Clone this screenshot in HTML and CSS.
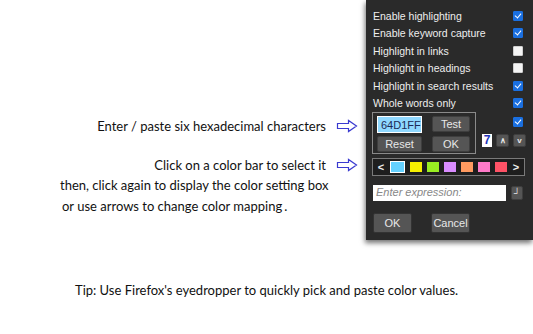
FILE: index.html
```html
<!DOCTYPE html>
<html lang="en">

<head>
    <meta charset="UTF-8">
    <title>Highlighter options</title>
    <link rel="stylesheet" href="styles.css">
</head>

<body>
    <div class="page">
        <div class="top">
            <div class="notes">
                <div class="note note-hex">
                    <span>Enter / paste six hexadecimal characters</span>
                    <svg class="arrow" width="22" height="14" viewBox="0 0 22 14">
                        <path d="M1.5 4.5 H12.5 V1.5 L20.5 7 L12.5 12.5 V9.5 H1.5 Z" fill="none" stroke="#3a3ad0" stroke-width="1.2" stroke-linejoin="miter"/>
                    </svg>
                </div>
                <div class="note note-bar">
                    <span>Click on a color bar to select it</span>
                    <svg class="arrow" width="22" height="14" viewBox="0 0 22 14">
                        <path d="M1.5 4.5 H12.5 V1.5 L20.5 7 L12.5 12.5 V9.5 H1.5 Z" fill="none" stroke="#3a3ad0" stroke-width="1.2" stroke-linejoin="miter"/>
                    </svg>
                </div>
                <p class="note-line">then, click again to display the color setting box</p>
                <p class="note-line">or use arrows to change color mapping<span class="dot">.</span></p>
            </div>

            <div class="panel">
                <ul class="options">
                    <li><span>Enable highlighting</span><i class="check on"></i></li>
                    <li><span>Enable keyword capture</span><i class="check on"></i></li>
                    <li><span>Highlight in links</span><i class="check"></i></li>
                    <li><span>Highlight in headings</span><i class="check"></i></li>
                    <li><span>Highlight in search results</span><i class="check on"></i></li>
                    <li><span>Whole words only</span><i class="check on"></i></li>
                </ul>

                <div class="color-row">
                    <div class="color-box">
                        <span class="hex">64D1FF</span>
                        <button class="btn">Test</button>
                        <button class="btn">Reset</button>
                        <button class="btn">OK</button>
                    </div>
                    <div class="color-side">
                        <i class="check on"></i>
                        <div class="mapping">
                            <span class="num">7</span>
                            <button class="btn small">&#x2227;</button>
                            <button class="btn small">v</button>
                        </div>
                    </div>
                </div>

                <div class="bar">
                    <span class="bar-arrow">&lt;</span>
                    <span class="swatch selected" style="background:#64d1ff"></span>
                    <span class="swatch" style="background:#f7f000"></span>
                    <span class="swatch" style="background:#99ee22"></span>
                    <span class="swatch" style="background:#d98cff"></span>
                    <span class="swatch" style="background:#ff9a60"></span>
                    <span class="swatch" style="background:#ff7ac8"></span>
                    <span class="swatch" style="background:#ff5266"></span>
                    <span class="bar-arrow">&gt;</span>
                </div>

                <div class="expr">
                    <span class="expr-input">Enter expression:</span>
                    <button class="btn enter">&#x2518;</button>
                </div>

                <div class="actions">
                    <button class="btn big">OK</button>
                    <button class="btn big">Cancel</button>
                </div>
            </div>
        </div>

        <p class="tip">Tip: Use Firefox's eyedropper to quickly pick and paste color values.</p>
    </div>
</body>

</html>
```

FILE: styles.css
```css
html,
body {
    margin: 0;
    padding: 0;
    background: #fff;
}

.page {
    width: 533px;
    height: 334px;
    overflow: hidden;
    font-family: Lato, "Liberation Sans", sans-serif;
    color: #111;
}

.top {
    display: flex;
    align-items: flex-start;
}

.notes {
    width: 366px;
    padding-top: 117px;
    font-size: 13px;
}

.note {
    display: flex;
    justify-content: flex-end;
    align-items: center;
    height: 18px;
    padding-right: 8px;
}

.note .arrow {
    margin-left: 10px;
}

.note-bar {
    margin-top: 21px;
}

.note-line {
    margin: 3px 0 0;
    padding-left: 60px;
    line-height: 17px;
}

.note-line + .note-line {
    padding-left: 62px;
    margin-top: 4px;
}

.dot {
    margin-left: 2px;
}

/* popup panel */
.panel {
    box-sizing: border-box;
    width: 167px;
    height: 240px;
    padding: 7px 8px 0 7px;
    background: #2a2a2a;
    box-shadow: -1px 3px 5px rgba(0, 0, 0, 0.55);
    font-family: "Liberation Sans", Arial, sans-serif;
    font-size: 10.5px;
    color: #eee;
}

.options {
    list-style: none;
    margin: 0;
    padding: 0;
}

.options > li {
    display: flex;
    justify-content: space-between;
    align-items: center;
    height: 17.5px;
}

.check {
    display: block;
    box-sizing: border-box;
    width: 10px;
    height: 10px;
    margin-right: 2px;
    border-radius: 1px;
    background: #f4f4f4;
    border: 1px solid #cfcfcf;
}

.check.on {
    position: relative;
    background: #1a6fe0;
    border-color: #1a6fe0;
}

.check.on::after {
    content: '';
    position: absolute;
    left: 2px;
    top: 0px;
    width: 3px;
    height: 5px;
    border-right: 1.5px solid #fff;
    border-bottom: 1.5px solid #fff;
    transform: rotate(40deg);
}

.color-row {
    display: flex;
    align-items: flex-start;
}

.color-box {
    box-sizing: border-box;
    width: 104px;
    height: 42px;
    margin-left: -1px;
    padding: 3px 4px 0 4px;
    border: 1px solid #8a8a8a;
    display: grid;
    grid-template-columns: 45px 38px;
    grid-template-rows: 16px 16px;
    column-gap: 10px;
    row-gap: 4px;
}

.hex {
    display: flex;
    align-items: center;
    padding-left: 3px;
    height: 15px;
    background: #8fd8ff;
    border: 1px solid #fff;
    color: #1b2a55;
    font-size: 11px;
}

.btn {
    display: flex;
    align-items: center;
    justify-content: center;
    padding: 0;
    border: 1px solid #3e3e3e;
    border-radius: 2px;
    background: #555;
    color: #e8e8e8;
    font-family: "Liberation Sans", Arial, sans-serif;
    font-size: 11px;
}

.color-side {
    flex: 1;
    display: flex;
    flex-direction: column;
    align-items: flex-end;
    padding-top: 5px;
}

.mapping {
    display: flex;
    align-items: center;
    gap: 4px;
    margin-top: 7px;
    margin-right: -1px;
}

.num {
    box-sizing: border-box;
    width: 10px;
    height: 13px;
    background: #fff;
    color: #2233bb;
    font-weight: bold;
    font-size: 12px;
    line-height: 13px;
    text-align: center;
}

.btn.small {
    width: 13px;
    height: 13px;
    font-size: 8px;
    font-weight: bold;
}

.bar {
    box-sizing: border-box;
    display: flex;
    align-items: center;
    gap: 5px;
    width: 153px;
    height: 18px;
    margin: 4px 0 0 -1px;
    padding: 0 4px;
    border: 1px solid #7a7a7a;
    background: #1e1e1e;
    font-weight: bold;
    font-size: 11px;
}

.bar-arrow {
    width: 8px;
    text-align: center;
}

.swatch {
    display: block;
    width: 12px;
    height: 10px;
}

.swatch.selected {
    box-sizing: border-box;
    width: 15px;
    height: 12px;
    border: 1.5px solid #fff;
}

.expr {
    display: flex;
    align-items: center;
    justify-content: space-between;
    margin-top: 9px;
}

.expr-input {
    box-sizing: border-box;
    width: 133px;
    height: 16px;
    padding-left: 3px;
    line-height: 15px;
    background: #fff;
    color: #888;
    font-style: italic;
    font-size: 11px;
}

.btn.enter {
    width: 12px;
    height: 14px;
    margin-right: 2px;
    font-size: 9px;
}

.actions {
    display: flex;
    gap: 19px;
    margin-top: 12px;
}

.btn.big {
    width: 39px;
    height: 20px;
    border-color: #333;
}

.tip {
    margin: 42px 0 0 75px;
    font-size: 13px;
}
```
